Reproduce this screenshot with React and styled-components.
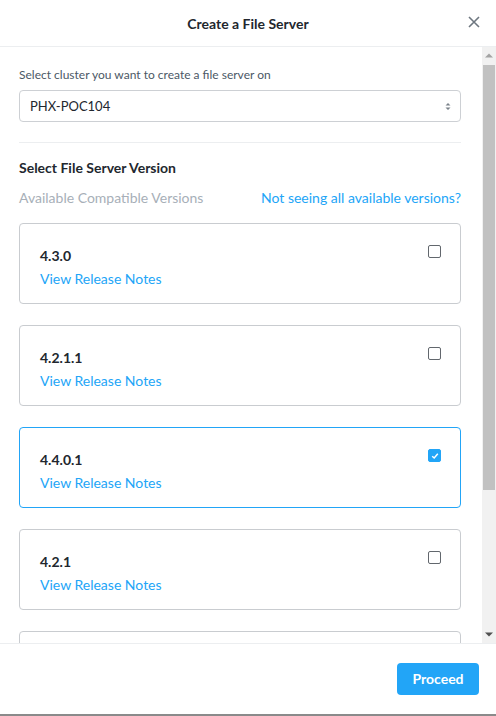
import React from 'react';
import styled, { createGlobalStyle } from 'styled-components';

const GlobalStyle = createGlobalStyle`
  html, body {
    margin: 0;
    padding: 0;
    background: #ffffff;
  }
  body {
    font-family: 'Lato', 'Open Sans', sans-serif;
    color: #22272e;
  }
  * {
    box-sizing: border-box;
  }
`;

const Modal = styled.div`
  width: 496px;
  height: 716px;
  display: flex;
  flex-direction: column;
  background: #fff;
  border-bottom: 2px solid #8a8a8a;
`;

const Header = styled.div`
  height: 47px;
  flex-shrink: 0;
  display: flex;
  align-items: center;
  justify-content: center;
  position: relative;
  border-bottom: 1px solid #eceef0;
`;

const Title = styled.h1`
  margin: 0;
  font-size: 14px;
  font-weight: 700;
  color: #22272e;
`;

const Close = styled.button`
  position: absolute;
  right: 15px;
  top: 15px;
  width: 14px;
  height: 14px;
  padding: 0;
  border: none;
  background: none;
  cursor: pointer;
  display: flex;
  align-items: center;
  justify-content: center;
`;

const BodyWrap = styled.div`
  flex: 1;
  min-height: 0;
  display: flex;
`;

const Body = styled.div`
  flex: 1;
  overflow-y: auto;
  scrollbar-width: none;
  padding: 20px 21px 20px 19px;
  &::-webkit-scrollbar {
    display: none;
  }
`;

const Scrollbar = styled.div`
  width: 14px;
  flex-shrink: 0;
  background: #f1f1f1;
  display: flex;
  flex-direction: column;
`;

const ScrollArrow = styled.div`
  height: 17px;
  display: flex;
  align-items: center;
  justify-content: center;
`;

const Thumb = styled.div`
  height: 425px;
  margin: 1px 1px 0;
  background: #c1c1c1;
`;

const Track = styled.div`
  flex: 1;
`;

const Label = styled.p`
  margin: 0 0 8px;
  font-size: 12px;
  color: #4b5866;
`;

const Select = styled.div`
  height: 32px;
  border: 1px solid #cdd0d4;
  border-radius: 4px;
  display: flex;
  align-items: center;
  justify-content: space-between;
  padding: 0 9px 0 10px;
  font-size: 13px;
  color: #22272e;
`;

const Divider = styled.hr`
  border: none;
  border-top: 1px solid #eceef0;
  margin: 20px 0 16px;
`;

const SectionTitle = styled.h2`
  margin: 0 0 13px;
  font-size: 14px;
  font-weight: 700;
  color: #22272e;
`;

const Row = styled.div`
  display: flex;
  justify-content: space-between;
  align-items: center;
  font-size: 14px;
  margin-bottom: 17px;
`;

const Muted = styled.span`
  color: #a7afb8;
`;

const Link = styled.a`
  color: #22a5f7;
  font-size: 14px;
  text-decoration: none;
  cursor: pointer;
`;

const Cards = styled.div`
  display: flex;
  flex-direction: column;
  gap: 21px;
`;

const Card = styled.div`
  height: 81px;
  flex-shrink: 0;
  border: 1px solid ${(p) => (p.$selected ? '#22a5f7' : '#c9ccd0')};
  border-radius: 4px;
  display: flex;
  justify-content: space-between;
  padding: 21px 19px 0 20px;
`;

const Version = styled.div`
  font-size: 14px;
  font-weight: 700;
  color: #22272e;
  margin-top: 2px;
  margin-bottom: 4px;
`;

const Box = styled.span`
  width: 13px;
  height: 13px;
  border-radius: 2px;
  border: 1px solid ${(p) => (p.$checked ? '#22a5f7' : '#62676d')};
  background: ${(p) => (p.$checked ? '#22a5f7' : '#fff')};
  display: flex;
  align-items: center;
  justify-content: center;
`;

const Footer = styled.div`
  height: 71px;
  flex-shrink: 0;
  border-top: 1px solid #eceef0;
  display: flex;
  align-items: flex-start;
  justify-content: flex-end;
  padding: 19px 17px 0 0;
`;

const Button = styled.button`
  width: 82px;
  height: 32px;
  border: none;
  border-radius: 4px;
  background: #22a5f7;
  color: #fff;
  font-family: inherit;
  font-size: 14px;
  font-weight: 700;
  line-height: 30px;
  cursor: pointer;
`;

const versions = [
  { v: '4.3.0' },
  { v: '4.2.1.1' },
  { v: '4.4.0.1', checked: true },
  { v: '4.2.1' },
  { v: '4.2.0' },
  { v: '4.1.0.3' },
];

export default function App() {
  return (
    <>
      <GlobalStyle />
      <Modal>
        <Header>
          <Title>Create a File Server</Title>
          <Close aria-label="close">
            <svg width="12" height="12" viewBox="0 0 12 12">
              <path d="M1 1L11 11M11 1L1 11" stroke="#6e7780" strokeWidth="1.6" />
            </svg>
          </Close>
        </Header>
        <BodyWrap>
          <Body>
            <Label>Select cluster you want to create a file server on</Label>
            <Select>
              <span>PHX-POC104</span>
              <svg width="6" height="9" viewBox="0 0 6 9">
                <path d="M0.5 3.5L3 1L5.5 3.5Z M0.5 5.5L3 8L5.5 5.5Z" fill="#7a828a" />
              </svg>
            </Select>
            <Divider />
            <SectionTitle>Select File Server Version</SectionTitle>
            <Row>
              <Muted>Available Compatible Versions</Muted>
              <Link>Not seeing all available versions?</Link>
            </Row>
            <Cards>
              {versions.map((item) => (
                <Card key={item.v} $selected={item.checked}>
                  <div>
                    <Version>{item.v}</Version>
                    <Link>View Release Notes</Link>
                  </div>
                  <Box $checked={item.checked}>
                    {item.checked && (
                      <svg width="8" height="8" viewBox="0 0 8 8">
                        <path d="M1.2 4.2L3.2 6L6.8 1.8" stroke="#fff" strokeWidth="1.5" fill="none" />
                      </svg>
                    )}
                  </Box>
                </Card>
              ))}
            </Cards>
          </Body>
          <Scrollbar aria-hidden="true">
            <ScrollArrow>
              <svg width="8" height="5" viewBox="0 0 8 5">
                <path d="M0 4.5L4 0.5L8 4.5Z" fill="#a3a3a3" />
              </svg>
            </ScrollArrow>
            <Thumb />
            <Track />
            <ScrollArrow>
              <svg width="8" height="5" viewBox="0 0 8 5">
                <path d="M0 0.5L4 4.5L8 0.5Z" fill="#505050" />
              </svg>
            </ScrollArrow>
          </Scrollbar>
        </BodyWrap>
        <Footer>
          <Button>Proceed</Button>
        </Footer>
      </Modal>
    </>
  );
}
